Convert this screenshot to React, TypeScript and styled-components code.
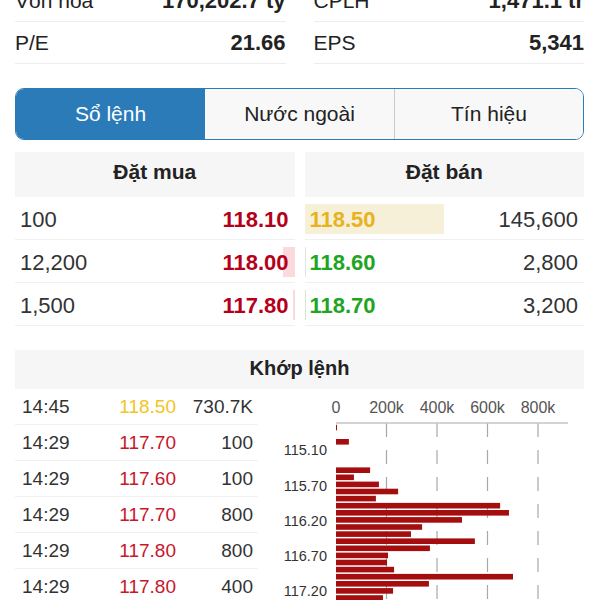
import React from 'react';
import styled, { createGlobalStyle } from 'styled-components';

const GlobalStyle = createGlobalStyle`
  body {
    margin: 0;
    background: #fff;
    overflow: hidden;
    font-family: 'Liberation Sans', Arial, sans-serif;
    color: #222;
  }
`;

const Page = styled.div`
  width: 600px;
  height: 600px;
  box-sizing: border-box;
  padding: 0 16px 0 15px;
  overflow: hidden;
`;

const StatsGrid = styled.div`
  display: grid;
  grid-template-columns: 1fr 1fr;
  column-gap: 28px;
  margin-top: -20px;
`;

const StatRow = styled.div`
  display: flex;
  justify-content: space-between;
  align-items: center;
  height: 41px;
  border-bottom: 1px solid #eeeeee;
`;

const StatLabel = styled.span`
  font-size: 21px;
  color: #222;
`;

const StatValue = styled.span`
  font-size: 22px;
  font-weight: bold;
  color: #222;
`;

const Tabs = styled.div`
  display: grid;
  grid-template-columns: repeat(3, 1fr);
  height: 52px;
  box-sizing: border-box;
  margin-top: 24px;
  border: 1.5px solid #2b7bb9;
  border-radius: 9px;
  overflow: hidden;
`;

const Tab = styled.div<{ $active?: boolean; $divider?: boolean }>`
  display: flex;
  align-items: center;
  justify-content: center;
  font-size: 21px;
  background: ${(p) => (p.$active ? '#2b7bb9' : '#f8f8f8')};
  color: ${(p) => (p.$active ? '#fff' : '#222')};
  border-left: ${(p) => (p.$divider ? '1px solid #c9c9c9' : 'none')};
`;

const Book = styled.div`
  display: grid;
  grid-template-columns: 1fr 1fr;
  column-gap: 10px;
  margin-top: 12px;
`;

const BookHeader = styled.div`
  height: 45px;
  box-sizing: border-box;
  padding-bottom: 6px;
  display: flex;
  align-items: center;
  justify-content: center;
  background: #f6f6f6;
  font-size: 21px;
  font-weight: bold;
  color: #222;
`;

const BookRow = styled.div`
  position: relative;
  display: flex;
  justify-content: space-between;
  align-items: center;
  height: 43px;
  box-sizing: border-box;
  padding: 4px 6px 0 5px;
  border-bottom: 1px solid #f0f0f0;
  font-size: 22px;
`;

const DepthBar = styled.div<{ $side: 'left' | 'right'; $tint: string }>`
  position: absolute;
  top: 7px;
  bottom: 5px;
  ${(p) => p.$side}: 0;
  background: ${(p) => p.$tint};
`;

const Cell = styled.span<{ $color?: string; $bold?: boolean }>`
  position: relative;
  color: ${(p) => p.$color || '#333'};
  font-weight: ${(p) => (p.$bold ? 'bold' : 'normal')};
`;

const MatchHeader = styled(BookHeader)`
  height: 39px;
  padding-bottom: 2px;
  margin-top: 24px;
  font-size: 20px;
`;

const MatchBody = styled.div`
  display: flex;
  gap: 12px;
`;

const TradeTable = styled.div`
  width: 243px;
  flex-shrink: 0;
`;

const TradeRow = styled.div`
  display: grid;
  grid-template-columns: 80px 74px 1fr;
  align-items: center;
  height: 35px;
  padding: 0 5px 0 7px;
  border-bottom: 1px solid #f0f0f0;
  font-size: 19px;
  color: #333;
`;

const TradeCell = styled.span<{ $color?: string; $right?: boolean }>`
  color: ${(p) => p.$color || '#333'};
  text-align: ${(p) => (p.$right ? 'right' : 'left')};
`;

const ChartBox = styled.div`
  flex: 1;
`;

const RED = '#b5001a';
const GREEN = '#20a520';
const YELLOW = '#e6b31e';

const stats = [
  [
    ['Vốn hóa', '170,202.7 tỷ'],
    ['P/E', '21.66'],
  ],
  [
    ['CPLH', '1,471.1 tr'],
    ['EPS', '5,341'],
  ],
];

const buys = [
  { vol: '100', price: '118.10', bar: 0 },
  { vol: '12,200', price: '118.00', bar: 12 },
  { vol: '1,500', price: '117.80', bar: 1.5 },
];

const sells = [
  { vol: '145,600', price: '118.50', color: YELLOW, tint: '#f7f0d9', bar: 139 },
  { vol: '2,800', price: '118.60', color: GREEN, tint: '#dde8dd', bar: 1.5 },
  { vol: '3,200', price: '118.70', color: GREEN, tint: '#d3e6d3', bar: 1.5 },
];

const trades = [
  ['14:45', '118.50', '730.7K'],
  ['14:29', '117.70', '100'],
  ['14:29', '117.60', '100'],
  ['14:29', '117.70', '800'],
  ['14:29', '117.80', '800'],
  ['14:29', '117.80', '400'],
];

// volume (k) per price slot, from top of chart
const bars: [number, number][] = [
  [-2, 3],
  [0, 51],
  [4, 135],
  [5, 71],
  [6, 170],
  [7, 246],
  [8, 158],
  [9, 650],
  [10, 685],
  [11, 499],
  [12, 341],
  [13, 297],
  [14, 550],
  [15, 372],
  [16, 206],
  [17, 202],
  [18, 230],
  [19, 701],
  [20, 368],
  [21, 226],
  [22, 186],
];

const yLabels: [string, number][] = [
  ['115.10', 61],
  ['115.70', 97],
  ['116.20', 132],
  ['116.70', 167],
  ['117.20', 202],
];

const X0 = 66;
const AXIS_Y = 34;
const PX_PER_K = 50.5 / 200;

const VolumeChart = () => (
  <svg width="314" height="211" viewBox="0 0 314 211">
    {[0, 200, 400, 600, 800].map((k) => (
      <text
        key={k}
        x={X0 + k * PX_PER_K}
        y={AXIS_Y - 10}
        textAnchor="middle"
        fontSize="16"
        fill="#555"
        fontFamily="Liberation Sans, Arial, sans-serif"
      >
        {k === 0 ? '0' : `${k}k`}
      </text>
    ))}
    {[200, 400, 600, 800].map((k) => (
      <line
        key={k}
        x1={X0 + k * PX_PER_K}
        x2={X0 + k * PX_PER_K}
        y1={AXIS_Y}
        y2={211}
        stroke="#a8a8a8"
        strokeWidth="1.2"
        strokeDasharray="14 13"
      />
    ))}
    <line x1={X0} x2={298} y1={AXIS_Y} y2={AXIS_Y} stroke="#c4c4c4" strokeWidth="1.5" />
    {bars.map(([slot, v]) => (
      <rect
        key={slot}
        x={X0}
        y={50 + slot * 7.1}
        width={Math.max(v * PX_PER_K, 1)}
        height={5.6}
        fill="#a40e0e"
      />
    ))}
    {yLabels.map(([t, y]) => (
      <text
        key={t}
        x={57}
        y={y + 5}
        textAnchor="end"
        fontSize="14.5"
        fill="#333"
        fontFamily="Liberation Sans, Arial, sans-serif"
      >
        {t}
      </text>
    ))}
  </svg>
);

const App = () => (
  <>
    <GlobalStyle />
    <Page>
      <StatsGrid>
        {stats.map((col, i) => (
          <div key={i}>
            {col.map(([label, value]) => (
              <StatRow key={label}>
                <StatLabel>{label}</StatLabel>
                <StatValue>{value}</StatValue>
              </StatRow>
            ))}
          </div>
        ))}
      </StatsGrid>

      <Tabs>
        <Tab $active>Sổ lệnh</Tab>
        <Tab>Nước ngoài</Tab>
        <Tab $divider>Tín hiệu</Tab>
      </Tabs>

      <Book>
        <div>
          <BookHeader>Đặt mua</BookHeader>
          {buys.map((b) => (
            <BookRow key={b.price}>
              {b.bar > 0 && <DepthBar $side="right" $tint="#fadadd" style={{ width: b.bar }} />}
              <Cell>{b.vol}</Cell>
              <Cell $color={RED} $bold>
                {b.price}
              </Cell>
            </BookRow>
          ))}
        </div>
        <div>
          <BookHeader>Đặt bán</BookHeader>
          {sells.map((s) => (
            <BookRow key={s.price}>
              <DepthBar $side="left" $tint={s.tint} style={{ width: s.bar }} />
              <Cell $color={s.color} $bold>
                {s.price}
              </Cell>
              <Cell>{s.vol}</Cell>
            </BookRow>
          ))}
        </div>
      </Book>

      <MatchHeader>Khớp lệnh</MatchHeader>
      <MatchBody>
        <TradeTable>
          {trades.map(([time, price, vol], i) => (
            <TradeRow key={i}>
              <TradeCell>{time}</TradeCell>
              <TradeCell $right $color={price === '118.50' ? '#f2c523' : '#c8162c'}>
                {price}
              </TradeCell>
              <TradeCell $right>{vol}</TradeCell>
            </TradeRow>
          ))}
        </TradeTable>
        <ChartBox>
          <VolumeChart />
        </ChartBox>
      </MatchBody>
    </Page>
  </>
);

export default App;
